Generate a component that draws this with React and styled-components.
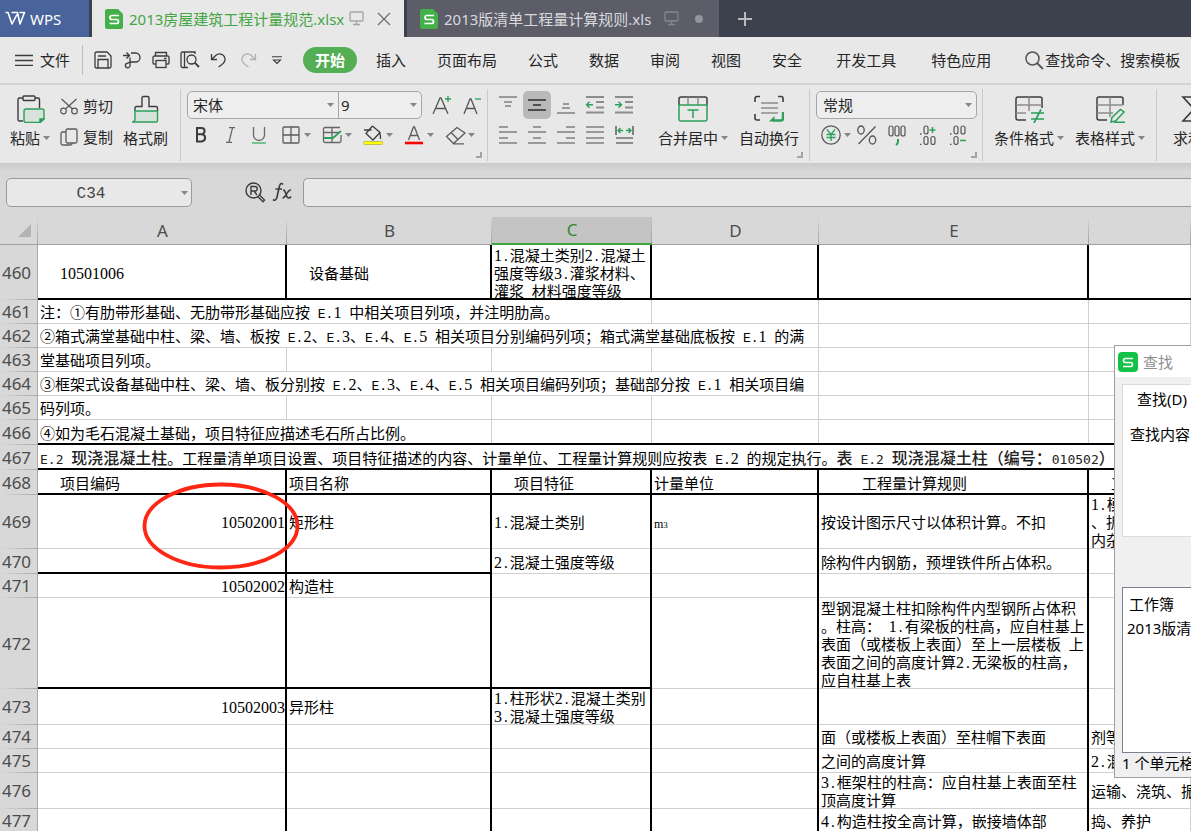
import React from "react";
import styled, { createGlobalStyle, css } from "styled-components";

const INK = "#3c3c3c";
const SOFT = "#8c8c8c";
const GREEN = "#2c9f5a";

const GlobalStyle = createGlobalStyle`
  *, *::before, *::after { box-sizing: border-box; }
  body {
    margin: 0;
    overflow: hidden;
    background: #fff;
    color: #262626;
    font: 15px/20px "Noto Sans", "Noto Sans CJK SC", sans-serif;
  }
  button, input, select { font: inherit; color: inherit; }
`;

const Window = styled.div`
  position: relative;
  height: 100vh;
  overflow: hidden;
`;

const plain = css`
  padding: 0;
  border: 0;
  background: none;
  white-space: nowrap;
`;

/* ---------- title bar ---------- */
const TitleBar = styled.header`
  display: flex;
  height: 37px;
  background: #3d414d;
`;
const HomeButton = styled.button`
  ${plain}
  display: flex;
  align-items: center;
  gap: 4px;
  width: 89px;
  margin-right: 3px;
  padding-left: 5px;
  color: #fff;
  background: #48649b;
`;
const FileTab = styled.div`
  display: flex;
  align-items: center;
  width: 312px;
  padding: 0 12px 0 13px;
  margin-right: 3px;
  color: ${(p) => (p.$active ? "#45a545" : "#d9d9dd")};
  background: ${(p) => (p.$active ? "#e8e8e8" : "#5c5d69")};
`;
const FileName = styled.span`
  margin: 0 auto 0 6px;
  white-space: nowrap;
`;
const TabIcons = styled.span`
  display: flex;
  align-items: center;
  gap: ${(p) => (p.$wide ? 14 : 12)}px;
`;
const IconButton = styled.button`
  ${plain}
  display: flex;
  align-items: center;
  justify-content: center;
  width: ${(p) => p.$w || 22}px;
  height: ${(p) => p.$h || 28}px;
  border-radius: 5px;
  background: ${(p) => (p.$on ? "#b9b9b9" : "none")};
`;

/* ---------- menu bar ---------- */
const MenuBar = styled.nav`
  display: flex;
  align-items: center;
  height: 48px;
  padding-left: 15px;
  border-bottom: 2px solid #d4d4d4;
  background: #e8e8e8;
  > * { flex-shrink: 0; }
`;
const FileMenu = styled.button`
  ${plain}
  display: flex;
  align-items: center;
  gap: 7px;
`;
const MenuRule = styled.span`
  width: 1px;
  height: 30px;
  margin: 0 9px 0 12px;
  background: #bdbdbd;
`;
const QuickTools = styled.div`
  display: flex;
  gap: 7px;
  margin-right: 15px;
`;
const ActiveMenu = styled.button`
  ${plain}
  width: 54px;
  height: 26px;
  margin-right: 19px;
  border-radius: 13px;
  color: #fff;
  font-weight: 700;
  background: #54ae54;
`;
const Menus = styled.div`
  display: flex;
  gap: ${(p) => p.$gap}px;
  margin-right: 34px;
`;
const Menu = styled.button`
  ${plain}
`;
const SearchButton = styled.button`
  ${plain}
  display: flex;
  align-items: center;
  gap: 1px;
`;

/* ---------- ribbon ---------- */
const Ribbon = styled.section`
  display: flex;
  height: 78px;
  background: #e8e8e8;
  overflow: hidden;
  > * { flex-shrink: 0; }
`;
const Group = styled.div`
  padding: 6px ${(p) => p.$right}px 0 ${(p) => p.$left}px;
`;
const GroupBody = styled.div`
  display: flex;
  gap: ${(p) => p.$gap || 0}px;
  height: 61px;
  padding-right: ${(p) => p.$end || 0}px;
`;
const Corner = styled.button`
  ${plain}
  display: block;
  width: 6px;
  height: 6px;
  margin-left: auto;
  border: solid #a3a3a3;
  border-width: 0 2px 2px 0;
`;
const Divider = styled.span`
  width: 1px;
  height: 72px;
  margin-top: 4px;
  background: #c9c9c9;
`;
const BigTool = styled.button`
  ${plain}
  display: flex;
  flex-direction: column;
  align-items: center;
  gap: 5px;
  padding-top: 4px;
`;
const ToolLabel = styled.span`
  display: flex;
  align-items: center;
  gap: 3px;
`;
const SmallTools = styled.div`
  display: flex;
  flex-direction: column;
  gap: 9px;
  padding-top: 4px;
`;
const SmallTool = styled.button`
  ${plain}
  display: flex;
  align-items: center;
  gap: 5px;
  height: 22px;
`;
const Rows = styled.div`
  display: flex;
  flex-direction: column;
  gap: 2px;
`;
const ToolRow = styled.div`
  display: flex;
  align-items: center;
  gap: ${(p) => p.$gap}px;
  padding-left: ${(p) => p.$left || 0}px;
`;
const DropTool = styled.button`
  ${plain}
  display: flex;
  align-items: center;
  gap: 2px;
  height: 28px;
`;
const Combo = styled.div`
  display: flex;
  height: 28px;
  border: 1px solid #a6a6a6;
  border-radius: 5px;
  background: #eee;
`;
const Field = styled.label`
  display: flex;
  align-items: center;
  width: ${(p) => p.$w}px;
  padding-right: 4px;
  & + & { border-left: 1px solid #a6a6a6; }
`;
const Select = styled.select`
  flex: 1;
  min-width: 0;
  height: 100%;
  padding: 0 0 0 ${(p) => p.$left}px;
  border: 0;
  outline: 0;
  appearance: none;
  background: none;
`;

/* ---------- formula bar ---------- */
const FormulaBar = styled.section`
  display: flex;
  align-items: flex-start;
  height: 54px;
  padding: 15px 0 0 6px;
  background: linear-gradient(#c9c9c9, #d8d8d8 8px);
`;
const NameBox = styled.label`
  display: flex;
  align-items: center;
  width: 186px;
  height: 29px;
  margin-right: 52px;
  padding-right: 3px;
  border: 1px solid #9a9a9a;
  border-radius: 5px;
  background: #e8e8e8;
`;
const NameInput = styled.input`
  flex: 1;
  min-width: 0;
  padding: 2px 6px 0 0;
  border: 0;
  outline: 0;
  background: none;
  color: #444;
  text-align: center;
  font: 16px/20px "Liberation Mono", monospace;
`;
const FormulaInput = styled.input`
  flex: 1;
  min-width: 0;
  height: 29px;
  margin-left: 5px;
  border: 1px solid #9a9a9a;
  border-right: 0;
  border-radius: 5px 0 0 5px;
  outline: 0;
  background: #e8e8e8;
`;

/* ---------- sheet ---------- */
const Sheet = styled.main`
  position: relative;
`;
const Grid = styled.table`
  width: 100%;
  min-width: 1180px;
  table-layout: fixed;
  border-collapse: separate;
  border-spacing: 0;
  color: #000;
  font-family: "Noto Sans CJK SC", sans-serif;
  line-height: 18px;
  text-spacing-trim: space-all;
`;
const Col = styled.col`
  width: ${(p) => (p.$w ? `${p.$w}px` : "auto")};
`;
const headFont = css`
  padding: 0;
  font: 400 17px/22px "Noto Sans", sans-serif;
  color: #4c4c4c;
`;
const ColHead = styled.th`
  ${headFont}
  height: 28px;
  color: ${(p) => (p.$on ? "#2e8b2e" : "#4c4c4c")};
  border-bottom: ${(p) => (p.$on ? "2px solid #3fa63f" : "1px solid #a0a0a0")};
  background:
    linear-gradient(transparent, #a0a0a0) right / 1px 100% no-repeat,
    ${(p) => (p.$on ? "#c4c4c4" : "#d8d8d8")};
`;
const RowHead = styled.th`
  ${headFont}
  height: ${(p) => p.$h}px;
  padding-right: 4px;
  border-right: 1px solid #a9a9a9;
  background: linear-gradient(90deg, #d8d8d8, #a9a9a9) bottom / 100% 1px no-repeat, #d8d8d8;
`;
const line = (edge, heavy) => {
  const n = heavy ? 2 : 1;
  const c = heavy ? "#000" : "#d0d0d0";
  return edge === "right" ? `inset -${n}px 0 ${c}` : `inset 0 -${n}px ${c}`;
};
const Cell = styled.td`
  padding: 0 2px 0 ${(p) => p.$indent || 2}px;
  overflow: hidden;
  white-space: pre;
  text-align: ${(p) => (p.$num ? "right" : "left")};
  vertical-align: middle;
  box-shadow: ${(p) => {
    const r = line("right", p.$right);
    const b = line("bottom", p.$bottom);
    return p.$bottom ? `${b}, ${r}` : `${r}, ${b}`;
  }};
`;
const Latin = styled.span`
  font: 13px/13px "Liberation Mono", monospace;
`;
const Digits = styled.span`
  font: 16px/16px "Liberation Serif", serif;
`;
const Title = styled.span`
  font-size: 16px;
  font-weight: 500;
  color: #222;
  ${Latin}, ${Digits} {
    font: 13px/13px "DejaVu Sans Mono", monospace;
  }
`;
const Unit = styled.span`
  font: 12px/12px "Liberation Serif", serif;
  sub { font-size: 9px; line-height: 9px; vertical-align: baseline; }
`;
const Ring = styled.svg`
  position: absolute;
  left: 142px;
  top: 265px;
`;

/* ---------- find dialog ---------- */
const Dialog = styled.aside`
  position: absolute;
  left: 1114px;
  top: 345px;
  width: 460px;
  border: 1px solid #9f9f9f;
  background: #f0f0f0;
  color: #000;
`;
const DialogTitle = styled.div`
  display: flex;
  align-items: center;
  gap: 5px;
  height: 31px;
  padding-left: 3px;
  background: #fff;
  color: #8f8f8f;
`;
const TabPanel = styled.div`
  height: 153px;
  margin: 7px 7px 50px;
  border: 1px solid #dcdcdc;
  background: #fff;
`;
const DialogTab = styled.button`
  ${plain}
  display: block;
  margin: 4px 0 15px 14px;
`;
const FindLabel = styled.label`
  display: flex;
  gap: 8px;
  padding-left: 7px;
`;
const FindInput = styled.input`
  width: 300px;
  height: 24px;
  border: 1px solid #7a8290;
`;
const Results = styled.ul`
  height: 166px;
  margin: 0 7px;
  padding: 4px;
  border: 1px solid #7a8290;
  background: #fff;
  list-style: none;
  line-height: 24px;
  li:first-child { padding-left: 2px; }
`;
const Status = styled.div`
  padding: 0 7px 4px;
`;

/* ---------- icons ---------- */
const Svg = ({ w, h, c = INK, s = 1.3, children }) => (
  <svg width={w} height={h} viewBox={`0 0 ${w} ${h}`} fill="none" stroke={c} strokeWidth={s} aria-hidden="true">
    {children}
  </svg>
);
const Caret = () => (
  <svg width="7" height="4" viewBox="0 0 7 4" aria-hidden="true">
    <path d="M0 0h7L3.500 4z" fill="#858585" />
  </svg>
);
const DocIcon = () => (
  <svg width="18" height="20" viewBox="0 0 18 20" aria-hidden="true">
    <path d="M2 0h11l5 5v13a2 2 0 0 1-2 2H2a2 2 0 0 1-2-2V2a2 2 0 0 1 2-2z" fill="#43b049" />
    <path d="M14 6.500H7a2 2 0 0 0 0 4h4.500a2 2 0 0 1 0 4H4.500" fill="none" stroke="#fff" strokeWidth="1.700" />
  </svg>
);
const Monitor = ({ c }) => (
  <Svg w={15} h={15} c={c}>
    <rect x="1" y="1" width="13" height="9" rx="1" />
    <path d="M7.500 10v3.500M4 13.500h7" />
  </Svg>
);
const I = {
  wps: (
    <Svg w={21} h={15} c="#fff" s={1.6}>
      <path d="M.5 1.500H3L7 13 12 3.500M6.500 1.500h6L15 13 19.500 1.500h-5" strokeLinejoin="round" />
    </Svg>
  ),
  close: <Svg w={14} h={14} c="#6f6f6f"><path d="M1 1l12 12M13 1L1 13" /></Svg>,
  plus: <Svg w={16} h={16} c="#b9bbc1" s={2}><path d="M8 1v14M1 8h14" /></Svg>,
  menu: <Svg w={18} h={12}><path d="M0 1.500h18M0 6.500h18M0 11.500h18" /></Svg>,
  save: (
    <Svg w={18} h={18}>
      <path d="M1 2.500A1.500 1.500 0 0 1 2.500 1H13l4 4v10.500a1.500 1.500 0 0 1-1.500 1.500h-13A1.500 1.500 0 0 1 1 15.500z" />
      <path d="M4 17V8.500h10V17M4 5h8" />
    </Svg>
  ),
  exportPdf: (
    <Svg w={18} h={18}>
      <path d="M0 4.500h6M3.500 1.500l3 3-3 3M8 2h4.500a4.500 4.500 0 0 1 0 9H7v3.500a2.300 2.300 0 1 1-2.300-2.300L7 11V6.500" />
    </Svg>
  ),
  print: (
    <Svg w={18} h={18}>
      <path d="M3.500 5V1.500h11V5M3.500 13H2A1 1 0 0 1 1 12V6.500A1.500 1.500 0 0 1 2.500 5h13A1.500 1.500 0 0 1 17 6.500V12a1 1 0 0 1-1 1h-1.500M12 7.500h2.500" />
      <rect x="4" y="9.500" width="10" height="7" />
    </Svg>
  ),
  preview: (
    <Svg w={20} h={18}>
      <path d="M8 16.500H2.500A1.500 1.500 0 0 1 1 15V2.500A1.500 1.500 0 0 1 2.500 1H15v2M4.500 1v15.500" />
      <circle cx="11.500" cy="8.500" r="4.500" />
      <path d="M14.700 11.700L19 16" strokeWidth="1.800" />
    </Svg>
  ),
  undo: <Svg w={18} h={16}><path d="M1.500 2v5.500H7M1.500 7.500L6 3.200C9 .5 15 2 15 7.500c0 4-4 5.500-6.500 7.500" /></Svg>,
  redo: <Svg w={18} h={16} c="#b0b0b0"><path d="M16.500 2v5.500H11M16.500 7.500L12 3.200C9 .5 3 2 3 7.500c0 4 4 5.500 6.500 7.500" /></Svg>,
  more: <Svg w={12} h={9} s={1.1}><path d="M1 .8h10M2.500 4L6 7.500 9.500 4z" /></Svg>,
  search: <Svg w={19} h={19} c="#555" s={1.5}><circle cx="7.500" cy="7.500" r="6.500" /><path d="M12 12l6 6" strokeWidth="1.800" /></Svg>,
  paste: (
    <Svg w={29} h={28} s={1.4}>
      <path d="M7 3H3.500A1.500 1.500 0 0 0 2 4.500v20A1.500 1.500 0 0 0 3.500 26H7M19 3h3a1.500 1.500 0 0 1 1.500 1.500V13" />
      <rect x="7" y="1" width="12" height="4.500" rx="1" />
      <path d="M10 14h16a2 2 0 0 1 2 2v8l-4 3.500H10a2 2 0 0 1-2-2V16a2 2 0 0 1 2-2z" fill="#d6e2da" stroke={GREEN} />
      <path d="M24 27.500V24h4z" fill={GREEN} stroke={GREEN} />
    </Svg>
  ),
  cut: (
    <Svg w={18} h={17} c="#555" s={1.2}>
      <circle cx="3.500" cy="13" r="2.800" /><circle cx="14.500" cy="13" r="2.800" />
      <path d="M1.500 1l11 10M16.500 1l-11 10" />
    </Svg>
  ),
  copy: (
    <Svg w={18} h={18} c="#5c5c5c">
      <rect x="6" y="1" width="11" height="14" rx="1.500" />
      <path d="M6 4H2.500A1.500 1.500 0 0 0 1 5.500v10A1.500 1.500 0 0 0 2.500 17h8a1.500 1.500 0 0 0 1.500-1.500V15" />
    </Svg>
  ),
  brush: (
    <Svg w={27} h={28} s={1.4}>
      <path d="M3 16v-3a1.500 1.500 0 0 1 1.500-1.500H10V3a1.500 1.500 0 0 1 1.500-1.500h4A1.500 1.500 0 0 1 17 3v8.500h7A1.500 1.500 0 0 1 25.500 13v3" />
      <path d="M3 16h22.500v9.500a1.500 1.500 0 0 1-1.500 1.500H0c2 0 3-1 3-3z" fill="#d6e2da" stroke={GREEN} />
    </Svg>
  ),
  bigger: <Svg w={19} h={18} c="#555"><path d="M1 18L8 2h1l7 16M3.500 12.500h10" /><path d="M16 0v6M13 3h6" stroke={GREEN} /></Svg>,
  smaller: <Svg w={19} h={18} c="#555"><path d="M2 18L8 3h1l6 15M4.500 12.500h8" /><path d="M13 3h6" stroke={GREEN} /></Svg>,
  bold: <Svg w={12} h={16} s={2}><path d="M2 1v13.500h5a3.700 3.700 0 0 0 0-7.300H2h4.500a3 3 0 0 0 0-6.200z" /></Svg>,
  italic: <Svg w={9} h={16} c="#666" s={1.2}><path d="M3 .7h6M0 15.300h6M6.500 1L3 15" /></Svg>,
  underline: <Svg w={14} h={17} c="#666"><path d="M1.500 0v8a5.500 5.500 0 0 0 11 0V0" /><path d="M0 16h14" stroke="#6abf8b" strokeWidth="1.800" /></Svg>,
  borders: <Svg w={18} h={18} c="#5c5c5c"><rect x="1" y="1" width="16" height="16" rx="1" /><path d="M9 1v16M1 9h16" /></Svg>,
  tablePen: (
    <Svg w={21} h={18} c="#666">
      <path d="M18 1.500H3A1.500 1.500 0 0 0 1.500 3v12A1.500 1.500 0 0 0 3 16.500h14.500A1.500 1.500 0 0 0 19 15V9M1.500 6.500H18M10 1.500v15" />
      <path d="M1.500 12H11l8-7" stroke={GREEN} strokeWidth="1.800" />
    </Svg>
  ),
  fill: (
    <Svg w={20} h={20}>
      <path d="M9.500 1L17 7.500l-7 7.500-7-6.500L9.500 1M1 5h7.500M16 6c1 1.500 1.500 4 1.500 8" />
      <rect x="0.500" y="16.500" width="19" height="3" rx="1" fill="#ff0" stroke="#b3b34a" strokeWidth="0.800" />
    </Svg>
  ),
  fontColor: (
    <Svg w={18} h={20}>
      <path d="M3.500 15L8.500 2h1l5 13M5 10.500h8" stroke="#5c5c5c" />
      <path d="M0 18h18" stroke="#f00" strokeWidth="2.600" />
    </Svg>
  ),
  eraser: (
    <Svg w={21} h={19} c="#5c5c5c">
      <path d="M12 1.500L1.500 10.500l7 7 11.500-10.500zM6 6.500l7 7M8 17.800h11" />
    </Svg>
  ),
  outdent: (
    <Svg w={20} h={18} c={SOFT} s={1.8}>
      <path d="M1 1h18M11 6h8M11 11.500h8M1 16.500h18" />
      <path d="M8 8.800H1.500M4.500 5.800l-3 3 3 3" stroke={GREEN} strokeWidth="1.400" />
    </Svg>
  ),
  indent: (
    <Svg w={20} h={18} c={SOFT} s={1.8}>
      <path d="M1 1h18M11 6h8M11 11.500h8M1 16.500h18" />
      <path d="M1 8.800h6.500M4.500 5.800l3 3-3 3" stroke={GREEN} strokeWidth="1.400" />
    </Svg>
  ),
  distribute: (
    <Svg w={19} h={18} c={SOFT} s={1.8}>
      <path d="M1 12h17M1 17h17" />
      <path d="M1 0v9M18 0v9" stroke={INK} strokeWidth="1.200" />
      <path d="M8 4.500H3.500M5.500 2L3 4.500 5.500 7M11 4.500h4.500M13.500 2L16 4.500 13.500 7" stroke={GREEN} strokeWidth="1.400" />
    </Svg>
  ),
  merge: (
    <Svg w={30} h={28} s={1.5}>
      <path d="M1 10V4a2 2 0 0 1 2-2h24a2 2 0 0 1 2 2v6" />
      <path d="M10 2v8M20 2v8" stroke={SOFT} />
      <path d="M1 10h28v14a2 2 0 0 1-2 2H3a2 2 0 0 1-2-2zM9.500 15h11M15 15v8" stroke={GREEN} />
    </Svg>
  ),
  wrap: (
    <Svg w={30} h={28} s={1.6}>
      <path d="M6 1.500H3A2 2 0 0 0 1 3.500V7M24 1.500h3A2 2 0 0 1 29 3.500V7M6 25H3a2 2 0 0 1-2-2v-4" />
      <path d="M7 8h17M7 13h17M7 18h17" stroke={SOFT} />
      <path d="M29 17v6.500a2 2 0 0 1-2 2h-8" stroke={GREEN} strokeWidth="2.400" />
      <path d="M15 26.500l5.500-5.500v5.500z" fill={GREEN} stroke="none" />
    </Svg>
  ),
  yen: (
    <Svg w={20} h={20}>
      <circle cx="10" cy="10" r="9.200" stroke="#5c5c5c" />
      <path d="M6 4.500l4 5 4-5M5.500 9.500h9M5.500 12.500h9M10 9.500V16" stroke={GREEN} />
    </Svg>
  ),
  percent: <Svg w={20} h={20} c="#555"><ellipse cx="4" cy="5" rx="3.200" ry="4" /><ellipse cx="15.500" cy="15" rx="3.200" ry="4" /><path d="M18.500 1.500L1.500 19" /></Svg>,
  comma: (
    <Svg w={18} h={21} c="#555" s={1.2}>
      <rect x="1" y="1" width="4" height="10" rx="2" /><rect x="7" y="1" width="4" height="10" rx="2" /><rect x="13" y="1" width="4" height="10" rx="2" />
      <path d="M10 14v2.500c0 1.500-.5 2.500-2 3.500" stroke={GREEN} strokeWidth="2" />
    </Svg>
  ),
  decUp: (
    <Svg w={17} h={20} c="#555" s={1.2}>
      <rect x="5" y="1" width="4" height="8" rx="2" /><rect x="5" y="11.500" width="4" height="8" rx="2" /><rect x="12" y="11.500" width="4" height="8" rx="2" />
      <path d="M1 9h1.500M1 19.500h1.500" strokeWidth="1.600" />
      <path d="M13.500 2v6M10.500 5h6" stroke={GREEN} strokeWidth="1.500" />
    </Svg>
  ),
  decDown: (
    <Svg w={17} h={20} c="#555" s={1.2}>
      <rect x="5" y="1" width="4" height="8" rx="2" /><rect x="12" y="1" width="4" height="8" rx="2" /><rect x="5" y="11.500" width="4" height="8" rx="2" />
      <path d="M1 9h1.500M1 19.500h1.500" strokeWidth="1.600" />
      <path d="M11 15.500h6" stroke={GREEN} strokeWidth="1.500" />
    </Svg>
  ),
  condFormat: (
    <Svg w={30} h={28} s={1.5}>
      <path d="M12 25H4a2 2 0 0 1-2-2V4a2 2 0 0 1 2-2h22a2 2 0 0 1 2 2v9" />
      <path d="M2 10h26M15 2v14M2 18h10" stroke={SOFT} />
      <path d="M17 18h13M17 24h13M27 14.500L20 28" stroke={GREEN} strokeWidth="1.700" />
    </Svg>
  ),
  tableStyle: (
    <Svg w={30} h={28} s={1.5}>
      <path d="M12 25H4a2 2 0 0 1-2-2V4a2 2 0 0 1 2-2h22a2 2 0 0 1 2 2v6" />
      <path d="M2 10h26M15 2v20M2 18h16" stroke={SOFT} />
      <path d="M16 27l1-4.500L25.500 14.500l3.500 2.500-8.500 9zM19 27.300h11" stroke={GREEN} fill="#e8e8e8" />
    </Svg>
  ),
  sum: <Svg w={24} h={28} s={1.6}><path d="M22 6V2H2l11 12L2 26h20v-4" /></Svg>,
  zoomR: (
    <Svg w={21} h={21} s={1.4}>
      <circle cx="8.500" cy="8.500" r="7.500" />
      <path d="M6 13V4.500h4a2.200 2.200 0 0 1 0 4.500H6M9 9l3 4" />
      <path d="M14.500 13l5 5-1.500 1.800-5-5" />
    </Svg>
  ),
  fx: (
    <Svg w={20} h={20} s={1.6}>
      <path d="M11 2.500C8.500 0 7.500 3 7 6L5 15c-.6 3-2 4-4 2.500M3.500 7H10M11 8.500c3-2 2.500 7.500 5.500 7.500 1 0 2-.6 2.500-1.500M19 8c-3.500-1-5 8-8.500 8" />
    </Svg>
  ),
};

const Lines = ({ rows, c = SOFT }) => (
  <Svg w={18} h={18} c={c} s={1.7}>
    {rows.map(([x1, x2, y]) => <path key={y} d={`M${x1} ${y}H${x2}`} />)}
  </Svg>
);

/* ---------- data ---------- */
const QUICK = [
  ["保存", I.save], ["输出为PDF", I.exportPdf], ["打印", I.print], ["打印预览", I.preview],
  ["撤销", I.undo], ["恢复", I.redo], ["更多", I.more],
];
const ALIGN_TOP = [
  ["顶端对齐", <Lines rows={[[0, 18, 1], [5, 13, 6], [6, 12, 10]]} />],
  ["垂直居中", <Lines c={INK} rows={[[0, 18, 4], [5, 13, 9], [0, 18, 14]]} />, true],
  ["底端对齐", <Lines rows={[[6, 12, 8], [5, 13, 12], [0, 18, 17]]} />],
  ["减少缩进", I.outdent],
  ["增加缩进", I.indent],
];
const ALIGN_BOTTOM = [
  ["左对齐", <Lines rows={[[0, 9, 1], [0, 18, 6], [0, 9, 12], [0, 18, 17]]} />],
  ["水平居中", <Lines rows={[[5, 13, 1], [0, 18, 6], [5, 13, 12], [0, 18, 17]]} />],
  ["右对齐", <Lines rows={[[9, 18, 1], [0, 18, 6], [9, 18, 12], [0, 18, 17]]} />],
  ["两端对齐", <Lines rows={[[0, 18, 1], [0, 18, 6], [0, 18, 12], [0, 18, 17]]} />],
  ["分散对齐", I.distribute],
];
const K = { right: true };
const ROWS = [
  [460, 55, [
    { ...K, indent: 22, t: "10501006" }, { ...K, indent: 22, t: "设备基础" },
    { ...K, t: "1.混凝土类别2.混凝土\n强度等级3.灌浆材料、\n灌浆 材料强度等级" }, K, K, {},
  ], "ABCDEF"],
  [461, 24, [{ span: 3, t: "注：①有肋带形基础、无肋带形基础应按 E.1 中相关项目列项，并注明肋高。" }, {}, {}, {}]],
  [462, 24, [{ span: 4, t: "②箱式满堂基础中柱、梁、墙、板按 E.2、E.3、E.4、E.5 相关项目分别编码列项；箱式满堂基础底板按 E.1 的满" }, {}, {}]],
  [463, 24, [{ t: "堂基础项目列项。" }, {}, {}, {}, {}, {}]],
  [464, 24, [{ span: 4, t: "③框架式设备基础中柱、梁、墙、板分别按 E.2、E.3、E.4、E.5 相关项目编码列项；基础部分按 E.1 相关项目编" }, {}, {}]],
  [465, 24, [{ t: "码列项。" }, {}, {}, {}, {}, {}]],
  [466, 25, [{ span: 2, t: "④如为毛石混凝土基础，项目特征应描述毛石所占比例。" }, {}, {}, {}, {}], "ABCDEF"],
  [467, 25, [{
    span: 6,
    title: "E.2 现浇混凝土柱",
    t: "。工程量清单项目设置、项目特征描述的内容、计量单位、工程量计算规则应按表 E.2 的规定执行。",
    tail: "表 E.2 现浇混凝土柱（编号：010502）",
  }], "ABCDEF"],
  [468, 25, [
    { ...K, indent: 22, t: "项目编码" }, { ...K, t: "项目名称" }, { ...K, indent: 22, t: "项目特征" },
    { ...K, t: "计量单位" }, { ...K, indent: 43, t: "工程量计算规则" }, { indent: 22, t: "工作内容" },
  ], "ABCDEF"],
  [469, 54, [
    { ...K, num: true, t: "10502001" }, { ...K, t: "矩形柱" }, { ...K, t: "1.混凝土类别" }, { ...K, unit: true },
    { ...K, t: "按设计图示尺寸以体积计算。不扣" }, { t: "1.模板制作安装\n、拆除、清理模\n内杂物、刷隔离" },
  ]],
  [470, 25, [K, K, { ...K, t: "2.混凝土强度等级" }, K, { ...K, t: "除构件内钢筋，预埋铁件所占体积。" }, {}], "AB"],
  [471, 24, [{ ...K, num: true, t: "10502002" }, { ...K, t: "构造柱" }, K, K, K, {}]],
  [472, 91, [K, K, K, K, {
    ...K,
    t: "型钢混凝土柱扣除构件内型钢所占体积\n。柱高： 1.有梁板的柱高，应自柱基上\n表面（或楼板上表面）至上一层楼板 上\n表面之间的高度计算2.无梁板的柱高，\n应自柱基上表",
  }, {}], "ABC"],
  [473, 36, [{ ...K, num: true, t: "10502003" }, { ...K, t: "异形柱" }, { ...K, t: "1.柱形状2.混凝土类别\n3.混凝土强度等级" }, K, K, {}]],
  [474, 24, [K, K, K, K, { ...K, t: "面（或楼板上表面）至柱帽下表面" }, { t: "剂等" }]],
  [475, 24, [K, K, K, K, { ...K, t: "之间的高度计算" }, { t: "2.混凝土制作、" }]],
  [476, 36, [K, K, K, K, { ...K, t: "3.框架柱的柱高：应自柱基上表面至柱\n顶高度计算" }, { t: "运输、浇筑、振" }]],
  [477, 24, [K, K, K, K, { ...K, t: "4.构造柱按全高计算，嵌接墙体部" }, { t: "捣、养护" }]],
];

/* Half-width characters are set in faces whose advance is close to eight pixels. */
const Mixed = ({ text = "" }) =>
  text.split(/([0-9]+|[ -/:-~]+)/).map((part, i) => {
    if (i % 2 === 0) return part;
    return /[0-9]/.test(part) ? <Digits key={i}>{part}</Digits> : <Latin key={i}>{part}</Latin>;
  });

const SheetRow = ({ n, h, cells, heavy = "" }) => {
  let col = 0;
  return (
    <tr>
      <RowHead scope="row" $h={h}>{n}</RowHead>
      {cells.map((c, i) => {
        const letter = "ABCDEF"[col];
        col += c.span || 1;
        return (
          <Cell key={i} colSpan={c.span} $indent={c.indent} $num={c.num} $right={c.right} $bottom={heavy.includes(letter)}>
            {c.title && <Title><Mixed text={c.title} /></Title>}
            <Mixed text={c.t} />
            {c.tail && <Title><Mixed text={c.tail} /></Title>}
            {c.unit && <Unit>m<sub>3</sub></Unit>}
          </Cell>
        );
      })}
    </tr>
  );
};

const Big = ({ icon, label, drop }) => (
  <BigTool>
    {icon}
    <ToolLabel>{label}{drop && <Caret />}</ToolLabel>
  </BigTool>
);
const Drop = ({ icon, label }) => (
  <DropTool aria-label={label}>
    <IconButton as="span">{icon}</IconButton>
    <Caret />
  </DropTool>
);
const Picker = ({ label, value, w, left }) => (
  <Field $w={w}>
    <Select aria-label={label} $left={left} defaultValue={value}>
      <option>{value}</option>
    </Select>
    <Caret />
  </Field>
);

export default function App() {
  return (
    <Window>
      <GlobalStyle />
      <TitleBar>
        <HomeButton>{I.wps}WPS</HomeButton>
        <FileTab $active>
          <DocIcon />
          <FileName>2013房屋建筑工程计量规范.xlsx</FileName>
          <TabIcons>
            <Monitor c="#a6a6a6" />
            <IconButton $w={16} aria-label="关闭">{I.close}</IconButton>
          </TabIcons>
        </FileTab>
        <FileTab>
          <DocIcon />
          <FileName>2013版清单工程量计算规则.xls</FileName>
          <TabIcons $wide>
            <Monitor c="#85868f" />
            <Svg w={14} h={8}><circle cx="6" cy="4" r="4" fill="#94959c" stroke="none" /></Svg>
          </TabIcons>
        </FileTab>
        <IconButton $w={46} $h={37} aria-label="新建">{I.plus}</IconButton>
      </TitleBar>

      <MenuBar>
        <FileMenu>{I.menu}文件</FileMenu>
        <MenuRule />
        <QuickTools>
          {QUICK.map(([label, icon]) => <IconButton key={label} aria-label={label}>{icon}</IconButton>)}
        </QuickTools>
        <ActiveMenu>开始</ActiveMenu>
        <Menus $gap={31}>
          {["插入", "页面布局", "公式", "数据", "审阅", "视图", "安全"].map((m) => <Menu key={m}>{m}</Menu>)}
        </Menus>
        <Menus $gap={35}>
          {["开发工具", "特色应用"].map((m) => <Menu key={m}>{m}</Menu>)}
        </Menus>
        <SearchButton>{I.search}查找命令、搜索模板</SearchButton>
      </MenuBar>

      <Ribbon>
        <Group $left={10} $right={12}>
          <GroupBody $gap={10}>
            <Big icon={I.paste} label="粘贴" drop />
            <SmallTools>
              <SmallTool>{I.cut}剪切</SmallTool>
              <SmallTool>{I.copy}复制</SmallTool>
            </SmallTools>
            <Big icon={I.brush} label="格式刷" />
          </GroupBody>
        </Group>
        <Divider />
        <Group $left={6} $right={5}>
          <GroupBody>
            <Rows>
              <ToolRow $gap={8}>
                <Combo>
                  <Picker label="字体" value="宋体" w={150} left={5} />
                  <Picker label="字号" value="9" w={83} left={2} />
                </Combo>
                <IconButton aria-label="增大字号">{I.bigger}</IconButton>
                <IconButton aria-label="减小字号">{I.smaller}</IconButton>
              </ToolRow>
              <ToolRow $gap={7}>
                <ToolRow $gap={1}>
                  <IconButton $w={28} aria-label="加粗">{I.bold}</IconButton>
                  <IconButton $w={28} aria-label="倾斜">{I.italic}</IconButton>
                  <IconButton $w={28} aria-label="下划线">{I.underline}</IconButton>
                </ToolRow>
                <ToolRow $gap={10}>
                  <Drop label="边框" icon={I.borders} />
                  <Drop label="绘图边框" icon={I.tablePen} />
                  <Drop label="填充颜色" icon={I.fill} />
                  <Drop label="字体颜色" icon={I.fontColor} />
                  <Drop label="清除" icon={I.eraser} />
                </ToolRow>
              </ToolRow>
            </Rows>
          </GroupBody>
          <Corner aria-label="字体设置" />
        </Group>
        <Divider />
        <Group $left={6} $right={6}>
          <GroupBody $gap={11} $end={4}>
            <GroupBody $gap={20}>
              <Rows>
                {[ALIGN_TOP, ALIGN_BOTTOM].map((set, i) => (
                  <ToolRow key={i} $gap={1}>
                    {set.map(([label, icon, on]) => (
                      <IconButton key={label} $w={28} $on={on} aria-label={label}>{icon}</IconButton>
                    ))}
                  </ToolRow>
                ))}
              </Rows>
              <Big icon={I.merge} label="合并居中" drop />
            </GroupBody>
            <Big icon={I.wrap} label="自动换行" />
          </GroupBody>
          <Corner aria-label="对齐设置" />
        </Group>
        <Divider />
        <Group $left={6} $right={5}>
          <GroupBody>
            <Rows>
              <Combo>
                <Picker label="数字格式" value="常规" w={159} left={6} />
              </Combo>
              <ToolRow $gap={2} $left={4}>
                <Drop label="货币" icon={I.yen} />
                <IconButton $w={28} aria-label="百分比">{I.percent}</IconButton>
                <IconButton $w={28} aria-label="千位分隔">{I.comma}</IconButton>
                <IconButton $w={28} aria-label="增加小数位">{I.decUp}</IconButton>
                <IconButton $w={28} aria-label="减少小数位">{I.decDown}</IconButton>
              </ToolRow>
            </Rows>
          </GroupBody>
          <Corner aria-label="数字设置" />
        </Group>
        <Divider />
        <Group $left={11} $right={11}>
          <GroupBody $gap={11}>
            <Big icon={I.condFormat} label="条件格式" drop />
            <Big icon={I.tableStyle} label="表格样式" drop />
          </GroupBody>
        </Group>
        <Divider />
        <Group $left={16} $right={0}>
          <GroupBody>
            <Big icon={I.sum} label="求和" drop />
          </GroupBody>
        </Group>
      </Ribbon>

      <FormulaBar>
        <NameBox>
          <NameInput aria-label="名称框" defaultValue="C34" />
          <Caret />
        </NameBox>
        <IconButton aria-label="查找">{I.zoomR}</IconButton>
        <IconButton $w={32} aria-label="插入函数">{I.fx}</IconButton>
        <FormulaInput aria-label="编辑栏" />
      </FormulaBar>

      <Sheet>
        <Grid>
          <colgroup>
            {[38, 249, 205, 160, 167, 270, 0].map((w, i) => <Col key={i} $w={w} />)}
          </colgroup>
          <thead>
            <tr>
              <ColHead aria-label="全选">
                <Svg w={26} h={14}><path d="M25 1v13H12z" fill="#b3b3b3" stroke="none" /></Svg>
              </ColHead>
              {["A", "B", "C", "D", "E", ""].map((c, i) => <ColHead key={i} scope="col" $on={c === "C"}>{c}</ColHead>)}
            </tr>
          </thead>
          <tbody>
            {ROWS.map(([n, h, cells, heavy]) => <SheetRow key={n} n={n} h={h} cells={cells} heavy={heavy} />)}
          </tbody>
        </Grid>
        <Ring width="158" height="88" viewBox="0 0 158 88" fill="none" aria-hidden="true">
          <ellipse cx="79" cy="44" rx="76.500" ry="41.500" stroke="#ff2613" strokeWidth="3.800" />
        </Ring>
      </Sheet>

      <Dialog role="dialog" aria-label="查找">
        <DialogTitle>
          <svg width="20" height="20" viewBox="0 0 20 20" aria-hidden="true">
            <rect width="20" height="20" rx="4" fill="#13c246" />
            <path d="M15 6.500H7.500a2 2 0 0 0 0 4h5a2 2 0 0 1 0 4H5" fill="none" stroke="#fff" strokeWidth="1.600" />
          </svg>
          查找
        </DialogTitle>
        <TabPanel>
          <DialogTab>查找(D)</DialogTab>
          <FindLabel>查找内容<FindInput /></FindLabel>
        </TabPanel>
        <Results>
          <li>工作簿</li>
          <li>2013版清单工程量计算规则.xls</li>
        </Results>
        <Status>1 个单元格被找到</Status>
      </Dialog>
    </Window>
  );
}
